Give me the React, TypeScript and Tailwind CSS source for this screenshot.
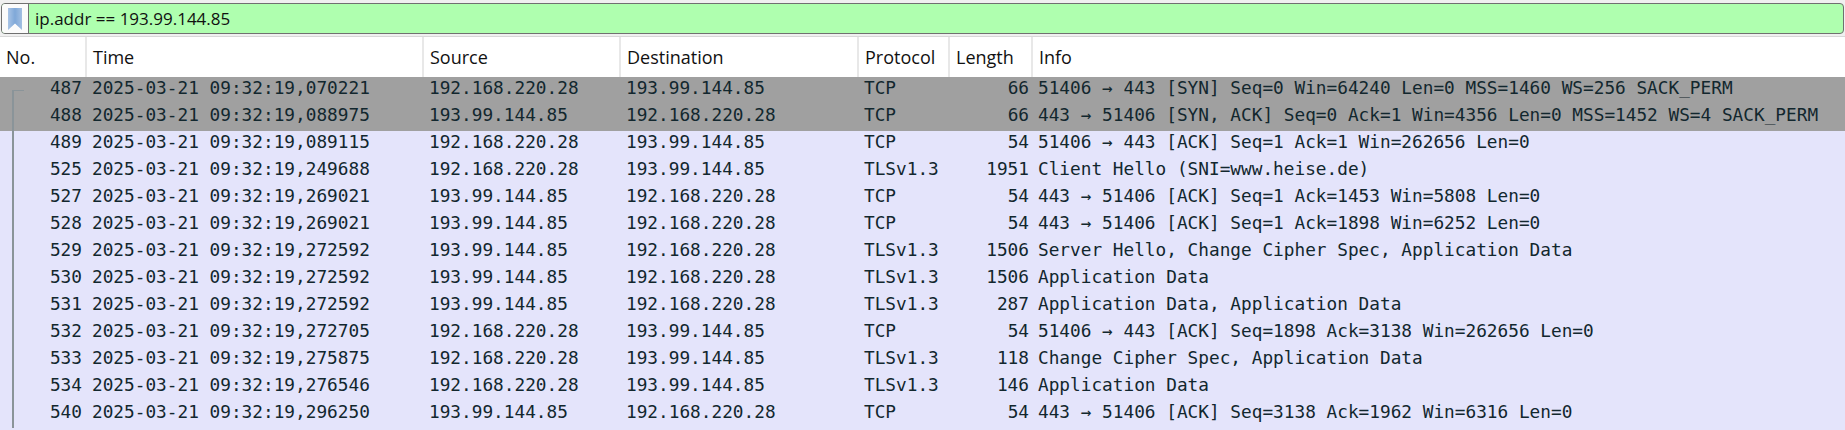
import React from 'react';

const rows = [
  ['487', '2025-03-21 09:32:19,070221', '192.168.220.28', '193.99.144.85', 'TCP', '66', '51406 → 443 [SYN] Seq=0 Win=64240 Len=0 MSS=1460 WS=256 SACK_PERM'],
  ['488', '2025-03-21 09:32:19,088975', '193.99.144.85', '192.168.220.28', 'TCP', '66', '443 → 51406 [SYN, ACK] Seq=0 Ack=1 Win=4356 Len=0 MSS=1452 WS=4 SACK_PERM'],
  ['489', '2025-03-21 09:32:19,089115', '192.168.220.28', '193.99.144.85', 'TCP', '54', '51406 → 443 [ACK] Seq=1 Ack=1 Win=262656 Len=0'],
  ['525', '2025-03-21 09:32:19,249688', '192.168.220.28', '193.99.144.85', 'TLSv1.3', '1951', 'Client Hello (SNI=www.heise.de)'],
  ['527', '2025-03-21 09:32:19,269021', '193.99.144.85', '192.168.220.28', 'TCP', '54', '443 → 51406 [ACK] Seq=1 Ack=1453 Win=5808 Len=0'],
  ['528', '2025-03-21 09:32:19,269021', '193.99.144.85', '192.168.220.28', 'TCP', '54', '443 → 51406 [ACK] Seq=1 Ack=1898 Win=6252 Len=0'],
  ['529', '2025-03-21 09:32:19,272592', '193.99.144.85', '192.168.220.28', 'TLSv1.3', '1506', 'Server Hello, Change Cipher Spec, Application Data'],
  ['530', '2025-03-21 09:32:19,272592', '193.99.144.85', '192.168.220.28', 'TLSv1.3', '1506', 'Application Data'],
  ['531', '2025-03-21 09:32:19,272592', '193.99.144.85', '192.168.220.28', 'TLSv1.3', '287', 'Application Data, Application Data'],
  ['532', '2025-03-21 09:32:19,272705', '192.168.220.28', '193.99.144.85', 'TCP', '54', '51406 → 443 [ACK] Seq=1898 Ack=3138 Win=262656 Len=0'],
  ['533', '2025-03-21 09:32:19,275875', '192.168.220.28', '193.99.144.85', 'TLSv1.3', '118', 'Change Cipher Spec, Application Data'],
  ['534', '2025-03-21 09:32:19,276546', '192.168.220.28', '193.99.144.85', 'TLSv1.3', '146', 'Application Data'],
  ['540', '2025-03-21 09:32:19,296250', '193.99.144.85', '192.168.220.28', 'TCP', '54', '443 → 51406 [ACK] Seq=3138 Ack=1962 Win=6316 Len=0'],
];

const headers = ['No.', 'Time', 'Source', 'Destination', 'Protocol', 'Length', 'Info'];

export default function App() {
  return (
    <div className="w-[1845px] h-[430px] overflow-hidden bg-white font-['Open_Sans','Noto_Sans',sans-serif]">
      {/* filter bar */}
      <div className="h-[37px] pt-[3px] px-px bg-[#f0f0f0] border-b border-[#d8d8d8]">
        <div className="h-[31px] flex items-stretch border border-[#707070] rounded-[4px] overflow-hidden bg-[#afffaf]">
          <div className="w-[27px] shrink-0 flex items-center justify-center bg-[#fbfbfb] border-r border-[#707070]">
            <svg width="14" height="22" viewBox="0 0 14 22">
              <defs>
                <linearGradient id="mark" x1="0" y1="0" x2="1" y2="0">
                  <stop offset="0" stopColor="#a9c4e6" />
                  <stop offset="0.5" stopColor="#7fa8d8" />
                  <stop offset="1" stopColor="#a3bfe2" />
                </linearGradient>
              </defs>
              <path d="M0 0H14V22L7 15.5L0 22Z" fill="url(#mark)" />
            </svg>
          </div>
          <div className="pl-[6px] text-[17px] leading-[30px] text-[#111]">ip.addr == 193.99.144.85</div>
        </div>
      </div>

      {/* column headers */}
      <div className="h-[40px] grid grid-cols-[87px_337px_197px_238px_91px_83px_1fr] bg-white">
        {headers.map((h) => (
          <div key={h} className="pl-[6px] border-r-2 border-[#e8e8e8] last:border-r-0 text-[18px] leading-[40px] text-[#111]">
            {h}
          </div>
        ))}
      </div>

      {/* packet rows */}
      <div className="relative font-['DejaVu_Sans_Mono',monospace] text-[17.75px] text-[#12272e]">
        {rows.map((r, i) => (
          <div
            key={r[0]}
            className={
              'h-[27px] leading-[23px] whitespace-pre grid grid-cols-[87px_337px_197px_238px_91px_83px_1fr] ' +
              (i < 2 ? 'bg-[#a0a0a0]' : 'bg-[#e4e4fb]')
            }
          >
            <div className="pr-[5px] text-right">{r[0]}</div>
            <div className="pl-[5px]">{r[1]}</div>
            <div className="pl-[5px]">{r[2]}</div>
            <div className="pl-[5px]">{r[3]}</div>
            <div className="pl-[5px]">{r[4]}</div>
            <div className="pr-[4px] text-right">{r[5]}</div>
            <div className="pl-[5px]">{r[6]}</div>
          </div>
        ))}
        <div className="absolute left-[12px] top-[13px] bottom-0 w-[12px] border-l-2 border-t border-[#8a9499]" />
      </div>
      <div className="h-[2px] bg-[#e4e4fb]" />
    </div>
  );
}
